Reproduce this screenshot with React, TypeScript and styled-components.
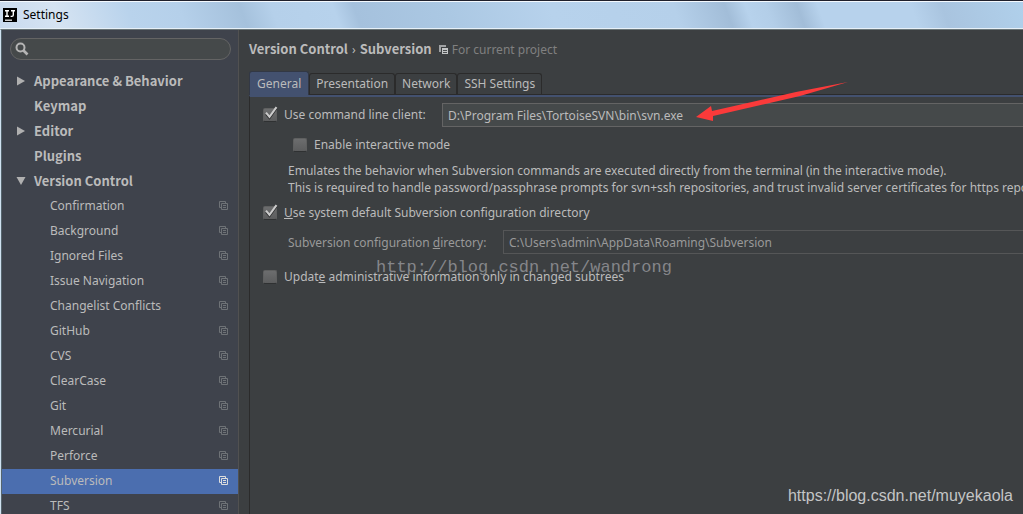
import React, { useState } from 'react';
import styled, { createGlobalStyle, css } from 'styled-components';

const boldFont = '"Noto Sans CJK SC", "Noto Sans", sans-serif';

const GlobalStyle = createGlobalStyle`
  * { box-sizing: border-box; }
  body {
    margin: 0;
    overflow: hidden;
    background: #3c3f41;
    color: #bbbbbb;
    font-family: "Noto Sans", "Open Sans", sans-serif;
    font-size: 12px;
  }
`;

const Window = styled.div`
  height: 100vh;
  display: flex;
  flex-direction: column;
  border-top: 1px solid #1f202c;
  overflow: hidden;
  position: relative;
`;

const TitleBar = styled.header`
  flex: none;
  height: 28px;
  display: flex;
  align-items: center;
  gap: 6px;
  padding: 0 3px;
  color: #000000;
  border-top: 1px solid #f4f9fe;
  border-bottom: 1px solid #e6f0f8;
  background: linear-gradient(
    70deg,
    #c9daee 0%,
    #d5e3f2 6%,
    #b9d3ec 13%,
    #b5d0ea 18%,
    #a5c1dc 24%,
    #b5d0ea 27%,
    #b7d2ec 33%,
    #a5c1dd 35%,
    #abc8e3 44%,
    #b7d2ec 54%,
    #b5d0ea 66%,
    #a2bdd8 71%,
    #b7d2ec 73%,
    #b3cee8 75%,
    #a2bdd8 78%,
    #b7d2ec 80%,
    #b7d2ec 89%,
    #a9c4df 92%,
    #b0d0eb 100%
  );
`;

const WindowTitle = styled.h1`
  margin: 0;
  font-size: 12px;
  line-height: 20px;
  font-weight: 400;
`;

const Body = styled.div`
  flex: 1;
  min-height: 0;
  display: flex;
  border-top: 1px solid #6b7678;
  border-left: 1px solid #cfe2f1;
`;

const Sidebar = styled.aside`
  flex: none;
  width: 238px;
  background: #3f434c;
  border-left: 1px solid #56656e;
  border-right: 1px solid #515151;
`;

const SearchBox = styled.label`
  display: flex;
  align-items: center;
  gap: 4px;
  height: 22px;
  margin: 8px 7px 9px 8px;
  padding: 0 4px;
  border: 1px solid #646464;
  border-radius: 11px;
  background: #45494a;
`;

const SearchInput = styled.input`
  flex: 1;
  min-width: 0;
  padding: 0;
  border: 0;
  outline: 0;
  background: none;
  color: #bbbbbb;
  font: inherit;
`;

const Tree = styled.nav`
  display: flex;
  flex-direction: column;
`;

const TreeRow = styled.button<{ $child?: boolean; $selected?: boolean }>`
  flex: none;
  display: flex;
  align-items: center;
  height: 25px;
  padding: 0 10px 2px 14px;
  border: 0;
  background: ${p => (p.$selected ? '#4b6eaf' : 'transparent')};
  color: ${p => (p.$selected ? '#dddddd' : '#6e7276')};
  font: 700 13px/20px ${boldFont};
  text-align: left;
  ${p => p.$child && css`
    padding-left: 48px;
    font: inherit;
    line-height: 20px;
  `}
`;

const RowLabel = styled.span`
  flex: 1;
  color: #bbbbbb;
`;

const ArrowSlot = styled.span`
  flex: none;
  display: flex;
  width: 18px;
`;

const Main = styled.main`
  flex: 1;
  min-width: 0;
  display: flex;
  flex-direction: column;
  padding-left: 10px;
`;

const Breadcrumb = styled.div`
  display: flex;
  align-items: center;
  height: 20px;
  margin-top: 9px;
  white-space: nowrap;
`;

const Crumb = styled.strong`
  font: 700 13px/20px ${boldFont};
`;

const CrumbSeparator = styled.span`
  margin: 0 4px;
`;

const Scope = styled.span`
  display: flex;
  align-items: center;
  gap: 4px;
  margin-left: 7px;
  color: #808080;
`;

const TabList = styled.div`
  display: flex;
  align-items: flex-end;
  margin-top: 12px;
  border-bottom: 1px solid #2b2b2b;
`;

const Tab = styled.button<{ $active?: boolean }>`
  height: 21px;
  padding: 0 6px;
  border: 1px solid #2b2b2b;
  border-bottom: 0;
  border-radius: 3px 3px 0 0;
  background: #3c3f41;
  color: #bbbbbb;
  font: inherit;
  line-height: 20px;
  white-space: nowrap;
  ${p => p.$active && css`
    height: 24px;
    margin-bottom: -1px;
    padding: 0 7px;
    background: #43516f;
    border-color: #323845;
  `}
`;

const Panel = styled.section`
  flex: 1;
  padding: 6px 0 0 13px;
  border-top: 2px solid #43516f;
  border-left: 1px solid #2b2b2b;
`;

const Row = styled.div<{ $gap?: number; $indent?: number }>`
  display: flex;
  align-items: center;
  min-height: 20px;
  margin-top: ${p => p.$gap ?? 0}px;
  padding-left: ${p => p.$indent ?? 0}px;
  white-space: nowrap;
`;

const CheckLabel = styled.label`
  display: flex;
  align-items: center;
  gap: 7px;
  line-height: 20px;
`;

const Tick = styled.svg`
  display: none;
  position: absolute;
  left: 0;
  top: -2px;
`;

const CheckSlot = styled.span`
  position: relative;
  display: flex;
  width: 14px;
  height: 14px;
`;

const CheckInput = styled.input`
  appearance: none;
  width: 14px;
  height: 14px;
  margin: 0;
  border: 1px solid #5f6060;
  border-bottom-color: #2f3132;
  border-radius: 2px;
  background: linear-gradient(#6c6d6e, #5c5d5e);
  &:checked + ${Tick} { display: block; }
`;

const Field = styled.input`
  flex: 1;
  min-width: 0;
  height: 24px;
  padding: 0 5px;
  border: 1px solid #646464;
  border-right: 0;
  border-radius: 0;
  outline: 0;
  background: #45494a;
  color: #bbbbbb;
  font: inherit;
  &:disabled {
    border-color: #555657;
    background: #3c3f41;
    color: #999999;
  }
`;

const FieldLabel = styled.label`
  min-width: 215px;
  color: #999999;
`;

const ClientLabel = styled.div`
  min-width: 179px;
`;

const Hint = styled.p`
  margin: 7px 0 0 25px;
  line-height: 17px;
  white-space: nowrap;
`;

const BlogMark = styled.div`
  position: absolute;
  left: 376px;
  top: 257px;
  color: #85868a;
  font-family: "Liberation Mono", monospace;
  font-size: 17px;
  line-height: 20px;
  pointer-events: none;
`;

const AuthorMark = styled.div`
  position: absolute;
  right: 10px;
  bottom: 8px;
  color: #c4c5c6;
  font-family: "Liberation Sans", sans-serif;
  font-size: 16px;
  line-height: 20px;
`;

const ArrowMark = styled.svg`
  position: absolute;
  left: 696px;
  top: 79px;
  pointer-events: none;
`;

const Logo = () => (
  <svg width="14" height="14" viewBox="0 0 14 14" aria-hidden="true">
    <rect width="14" height="14" fill="#000" />
    <path d="M2 2.7h4M4 2.7v6M2 8.3h4M8 2.7h4M10.3 2.7v4.3q0 1.4-1.4 1.4H7.6" stroke="#fff" strokeWidth="1.4" fill="none" />
    <path d="M2 12.2h7" stroke="#fff" strokeWidth="1.2" />
  </svg>
);

const SearchIcon = () => (
  <svg width="14" height="14" viewBox="0 0 14 14" fill="none" stroke="#b4b4b4" aria-hidden="true">
    <circle cx="5.5" cy="5.5" r="4" strokeWidth="2" />
    <path d="M8.5 8.5l4 4" strokeWidth="2.6" />
  </svg>
);

const CopyIcon = () => (
  <svg width="9" height="9" viewBox="0 0 9 9" fill="none" stroke="currentColor" aria-hidden="true">
    <path d="M2.5 6.5h-2v-6h6v2M2.5 2.5h6v6h-6zM4 4.5h3M4 6.5h3" />
  </svg>
);

const ScopeIcon = () => (
  <svg width="9" height="9" viewBox="0 0 9 9" aria-hidden="true">
    <path d="M0 0h7v2H2v5H0z" fill="#a0a2a4" />
    <path d="M3 3h6v6H3z" fill="#c3c5c6" />
    <path d="M4 5.5h4M4 7.5h4" stroke="#4b4e50" />
  </svg>
);

const Triangle = ({ open }: { open: boolean }) => (
  <svg width="10" height="10" viewBox="0 0 10 10" fill="#b0b0b0" aria-hidden="true">
    <path d={open ? 'M.5 1h9L5 9z' : 'M1 .5l8 4.5-8 4.5z'} />
  </svg>
);

const Checkbox = ({ id, checked }: { id: string; checked?: boolean }) => (
  <CheckSlot>
    <CheckInput id={id} type="checkbox" defaultChecked={checked} />
    <Tick width="15" height="14" viewBox="0 0 15 14" fill="none" aria-hidden="true">
      <path d="M3 8.2l3.5 4L13.5 2.5" stroke="#2c2d2e" strokeWidth="2" />
      <path d="M3 6.7l3.5 4.2L13.5 1.2" stroke="#cccccc" strokeWidth="2" />
    </Tick>
  </CheckSlot>
);

const groups = [
  { label: 'Appearance & Behavior', expandable: true },
  { label: 'Keymap' },
  { label: 'Editor', expandable: true },
  { label: 'Plugins' },
  { label: 'Version Control', expandable: true, open: true },
];

const children = [
  'Confirmation', 'Background', 'Ignored Files', 'Issue Navigation',
  'Changelist Conflicts', 'GitHub', 'CVS', 'ClearCase', 'Git',
  'Mercurial', 'Perforce', 'Subversion', 'TFS',
];

const tabs = ['General', 'Presentation', 'Network', 'SSH Settings'];

export default function App() {
  const [selected, setSelected] = useState('Subversion');
  const [tab, setTab] = useState('General');

  return (
    <Window>
      <GlobalStyle />
      <TitleBar>
        <Logo />
        <WindowTitle>Settings</WindowTitle>
      </TitleBar>
      <Body>
        <Sidebar>
          <SearchBox>
            <SearchIcon />
            <SearchInput type="text" aria-label="Search settings" />
          </SearchBox>
          <Tree aria-label="Settings">
            {groups.map(g => (
              <TreeRow key={g.label} type="button">
                <ArrowSlot>{g.expandable && <Triangle open={!!g.open} />}</ArrowSlot>
                <RowLabel>{g.label}</RowLabel>
              </TreeRow>
            ))}
            {children.map(c => (
              <TreeRow key={c} type="button" $child $selected={c === selected} onClick={() => setSelected(c)}>
                <RowLabel>{c}</RowLabel>
                <CopyIcon />
              </TreeRow>
            ))}
          </Tree>
        </Sidebar>
        <Main>
          <Breadcrumb>
            <Crumb>Version Control</Crumb>
            <CrumbSeparator>›</CrumbSeparator>
            <Crumb>Subversion</Crumb>
            <Scope><ScopeIcon />For current project</Scope>
          </Breadcrumb>
          <TabList role="tablist">
            {tabs.map(t => (
              <Tab key={t} type="button" role="tab" aria-selected={t === tab} $active={t === tab} onClick={() => setTab(t)}>
                {t}
              </Tab>
            ))}
          </TabList>
          <Panel>
            <Row>
              <ClientLabel>
                <CheckLabel htmlFor="client"><Checkbox id="client" checked />Use command line client:</CheckLabel>
              </ClientLabel>
              <Field type="text" aria-label="Command line client" defaultValue="D:\Program Files\TortoiseSVN\bin\svn.exe" />
            </Row>
            <Row $gap={8} $indent={30}>
              <CheckLabel htmlFor="interactive"><Checkbox id="interactive" />Enable interactive mode</CheckLabel>
            </Row>
            <Hint>
              Emulates the behavior when Subversion commands are executed directly from the terminal (in the interactive mode).<br />
              This is required to handle password/passphrase prompts for svn+ssh repositories, and trust invalid server certificates for https repositories.
            </Hint>
            <Row $gap={7}>
              <CheckLabel htmlFor="system"><Checkbox id="system" checked /><span><u>U</u>se system default Subversion configuration directory</span></CheckLabel>
            </Row>
            <Row $gap={7} $indent={25}>
              <FieldLabel htmlFor="directory">Subversion configuration <u>d</u>irectory:</FieldLabel>
              <Field id="directory" type="text" disabled defaultValue="C:\Users\admin\AppData\Roaming\Subversion" />
            </Row>
            <Row $gap={13}>
              <CheckLabel htmlFor="update"><Checkbox id="update" /><span>Updat<u>e</u> administrative information only in changed subtrees</span></CheckLabel>
            </Row>
          </Panel>
        </Main>
      </Body>
      <BlogMark>http://blog.csdn.net/wandrong</BlogMark>
      <ArrowMark width="154" height="44" viewBox="0 0 154 44" aria-hidden="true">
        <path d="M0 37L15 26l1 5L100 12 152 2 104 16 17 36v5z" fill="#fb3a3a" />
      </ArrowMark>
      <AuthorMark>https://blog.csdn.net/muyekaola</AuthorMark>
    </Window>
  );
}
